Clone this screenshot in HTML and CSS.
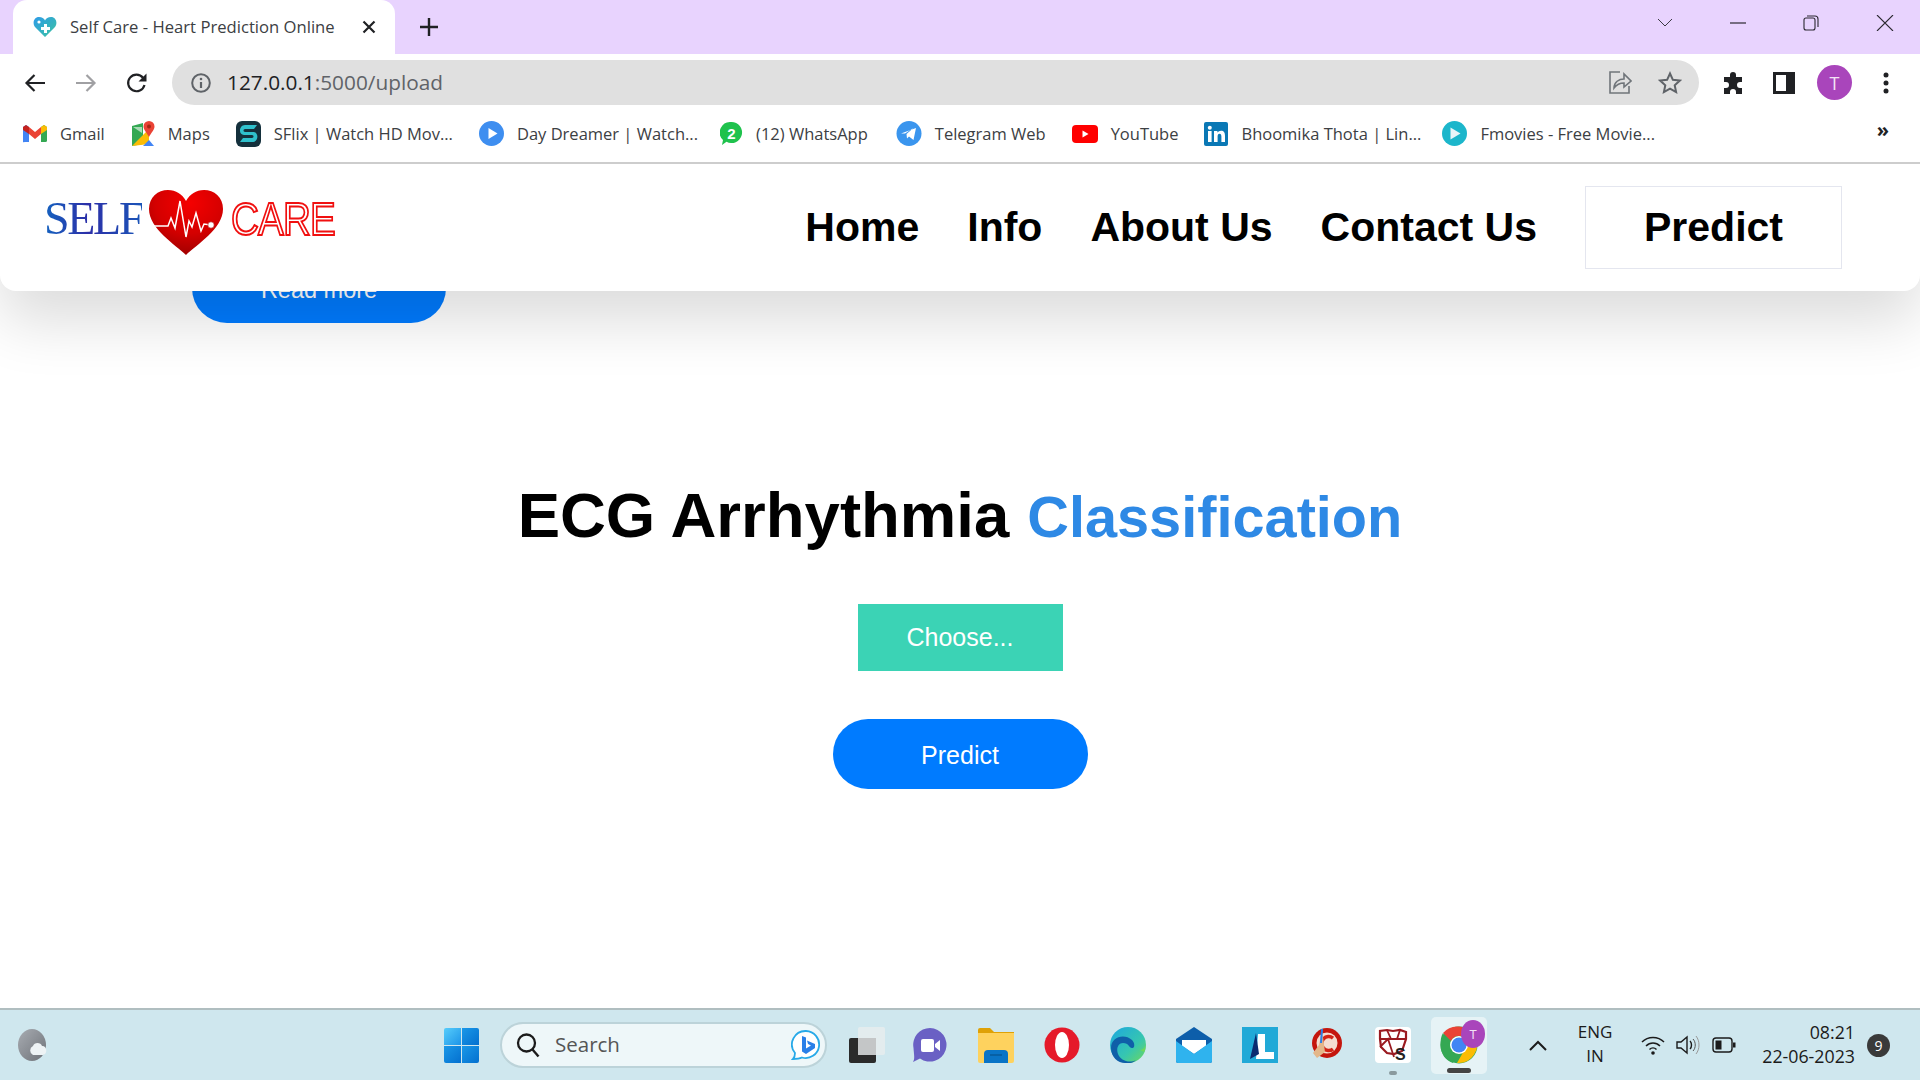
FILE: index.html
```html
<!DOCTYPE html>
<html lang="en">
<head>
<meta charset="utf-8">
<title>Self Care - Heart Prediction Online</title>
<link rel="stylesheet" href="styles.css">
</head>
<body>
<div class="tabstrip">
  <div class="tab">
    <svg width="24" height="22" viewBox="0 0 24 22"><defs><linearGradient id="fav" x1="0" y1="0" x2="1" y2="1"><stop offset="0" stop-color="#2e9be8"/><stop offset="1" stop-color="#3cc4a0"/></linearGradient></defs><path d="M12 21 2 11C-1 7 1 1 6 1c3 0 5 1.500 6 3.500C13 2.500 15 1 18 1c5 0 7 6 4 10z" fill="url(#fav)"/><path d="M11 8h3v3h3v3h-3v3h-3v-3H8v-3h3z" fill="#fff"/><circle cx="6" cy="6" r="1.600" fill="#fff"/></svg>
    <span class="tab-title">Self Care - Heart Prediction Online</span>
    <svg class="tab-close" width="14" height="14" viewBox="0 0 14 14"><path d="M1.500 1.500l11 11M12.500 1.500l-11 11" stroke="#202124" stroke-width="2.200" fill="none"/></svg>
  </div>
  <svg class="newtab" width="20" height="20" viewBox="0 0 20 20"><path d="M10 1v18M1 10h18" stroke="#202124" stroke-width="2.400" fill="none"/></svg>
  <div class="win-controls">
    <svg width="16" height="10" viewBox="0 0 16 10"><path d="M1 1l7 7 7-7" stroke="#3c3a44" stroke-width="1" fill="none"/></svg>
    <svg width="16" height="2" viewBox="0 0 16 2"><path d="M0 1h16" stroke="#2a2830" stroke-width="1.200"/></svg>
    <svg width="16" height="16" viewBox="0 0 16 16"><rect x="1" y="3" width="11" height="12" rx="2" fill="none" stroke="#2a2830" stroke-width="1.100"/><path d="M4 1h8a3 3 0 0 1 3 3v8" fill="none" stroke="#2a2830" stroke-width="1.100"/></svg>
    <svg width="18" height="16" viewBox="0 0 18 16"><path d="M1 0l16 16M17 0L1 16" stroke="#2a2830" stroke-width="1.100" fill="none"/></svg>
  </div>
</div>

<div class="toolbar">
  <svg width="22" height="20" viewBox="0 0 22 20"><path d="M21 10H3M10.500 2 2.500 10l8 8" fill="none" stroke="#202124" stroke-width="2.200"/></svg>
  <svg class="tool-fwd" width="22" height="20" viewBox="0 0 22 20"><path d="M1 10h18M11.500 2l8 8-8 8" fill="none" stroke="#a0a0a3" stroke-width="2.200"/></svg>
  <svg class="tool-reload" width="22" height="22" viewBox="0 0 22 22"><path d="M18.500 13a8.300 8.300 0 1 1-1.500-7.200" fill="none" stroke="#202124" stroke-width="2.200"/><path d="M20.500 1.500v8h-8z" fill="#202124"/></svg>
  <div class="omnibox">
    <svg width="22" height="20" viewBox="0 0 22 20"><circle cx="11" cy="10" r="8.800" fill="none" stroke="#5f6368" stroke-width="2"/><path d="M11 9v6" stroke="#5f6368" stroke-width="2.200"/><circle cx="11" cy="6" r="1.300" fill="#5f6368"/></svg>
    <span class="url"><span class="url-host">127.0.0.1</span>:5000/upload</span>
    <svg class="omni-share" width="24" height="24" viewBox="0 0 24 24"><path d="M12 2H2v21h19v-7" fill="none" stroke="#70757a" stroke-width="1.600" transform="translate(0 -1)"/><path d="M6 17c0-6 5-9 10-9V3l7 7-7 6v-4c-4 0-7 1-10 5z" fill="#e0e0e0" stroke="#70757a" stroke-width="1.600"/></svg>
    <svg class="omni-star" width="24" height="24" viewBox="0 0 24 24"><path d="M12 2.500l2.900 6.300 6.900.8-5.100 4.700 1.400 6.800-6.100-3.400-6.100 3.400 1.400-6.800-5.100-4.700 6.900-.8z" fill="none" stroke="#5f6368" stroke-width="2"/></svg>
  </div>
  <svg class="tool-ext" width="24" height="24" viewBox="0 0 24 24"><path d="M8 4a3 3 0 0 1 6 0v2h6v5h-2a3 3 0 0 0 0 6h2v6h-6v-2a3 3 0 0 0-6 0v2H2v-6h2a3 3 0 0 0 0-6H2V6h6z" fill="#202124"/></svg>
  <svg class="tool-side" width="22" height="22" viewBox="0 0 22 22"><rect x="0" y="0" width="22" height="22" fill="#202124"/><rect x="3" y="3" width="10" height="16" fill="#fff"/></svg>
  <div class="avatar">T</div>
  <svg class="tool-dots" width="6" height="22" viewBox="0 0 6 22"><circle cx="3" cy="3" r="2.500" fill="#202124"/><circle cx="3" cy="11" r="2.500" fill="#202124"/><circle cx="3" cy="19" r="2.500" fill="#202124"/></svg>
</div>

<div class="bookmarks">
  <a class="bm bm-gmail"><svg width="24" height="20" viewBox="0 0 24 20"><path d="M0 18V3l3-2 3 2v15H1.500A1.500 1.500 0 0 1 0 18z" fill="#4285f4"/><path d="M24 18V3l-3-2-3 2v15h4.500a1.500 1.500 0 0 0 1.500-1.500z" fill="#34a853"/><path d="M6 3l6 5 6-5v7l-6 5-6-5z" fill="#ea4335"/><path d="M18 3l3-2 3 2v3l-6 4z" fill="#fbbc04"/><path d="M0 3l3-2 3 2v7L0 6z" fill="#c5221f"/></svg><span>Gmail</span></a>
  <a class="bm bm-maps"><svg width="24" height="26" viewBox="0 0 24 26"><path d="M1 5l11-3v21l-11 2z" fill="#34a853"/><path d="M1 25 18 8v15z" fill="#fbbc04"/><path d="M12 25l6-6 5 6z" fill="#4285f4"/><path d="M2 6h9v6z" fill="#a8dab5"/><path d="M18 0a5.500 5.500 0 0 1 5.500 5.500C23.500 9 20 12 18 16c-2-4-5.500-7-5.500-10.500A5.500 5.500 0 0 1 18 0z" fill="#ea4335"/><circle cx="18" cy="5.500" r="2" fill="#a52714"/></svg><span>Maps</span></a>
  <a class="bm bm-sflix"><svg width="25" height="26" viewBox="0 0 25 26"><rect width="25" height="26" rx="6" fill="#14303c"/><path d="M21 4l-3 4H9c-2 0-2 3 0 3h8c6 0 6 10-1 10H4l3-4h9c2 0 2-3 0-3H8C2 14 3 4 9 4z" fill="#2fc0cc"/></svg><span>SFlix | Watch HD Mov...</span></a>
  <a class="bm bm-day"><svg width="25" height="25" viewBox="0 0 25 25"><circle cx="12.500" cy="12.500" r="12.500" fill="#3e8ef0"/><path d="M9.500 7l9 5.500-9 5.500z" fill="#fff"/></svg><span>Day Dreamer | Watch...</span></a>
  <a class="bm bm-wa"><svg width="23" height="25" viewBox="0 0 23 25"><path d="M11.500 1a10.500 10.500 0 1 1-5 19.700L2 24l1-5A10.500 10.500 0 0 1 11.500 1z" fill="#1fc24d"/><text x="11.500" y="17.500" class="wa-num">2</text></svg><span>(12) WhatsApp</span></a>
  <a class="bm bm-tg"><svg width="26" height="25" viewBox="0 0 26 25"><circle cx="13" cy="12.500" r="12.500" fill="#3a95ee"/><path d="M5 12.500 20 7l-2.500 12-4.500-3.500-2 2-.5-4.500 7-6-8.500 5.500z" fill="#fff"/></svg><span>Telegram Web</span></a>
  <a class="bm bm-yt"><svg width="26" height="18" viewBox="0 0 26 18"><rect width="26" height="18" rx="4" fill="#f00"/><path d="M10.500 5.500l6 3.500-6 3.500z" fill="#fff"/></svg><span>YouTube</span></a>
  <a class="bm bm-li"><svg width="24" height="24" viewBox="0 0 24 24"><rect width="24" height="24" rx="2" fill="#0a78b5"/><rect x="4" y="9" width="3.600" height="11" fill="#fff"/><circle cx="5.800" cy="5.800" r="2" fill="#fff"/><path d="M10 9h3.400v1.600C14.200 9.500 15.500 8.700 17 8.700c3 0 4 2 4 5V20h-3.600v-5.500c0-1.500-.5-2.700-1.900-2.700s-1.900 1.200-1.900 2.700V20H10z" fill="#fff"/></svg><span>Bhoomika Thota | Lin...</span></a>
  <a class="bm bm-fm"><svg width="25" height="25" viewBox="0 0 25 25"><circle cx="12.500" cy="12.500" r="12.500" fill="#1cb6cb"/><path d="M8.500 6.500l10 6-10 6z" fill="#e8f5f8"/></svg><span>Fmovies - Free Movie...</span></a>
  <span class="bm-more">»</span>
</div>

<div class="viewport">
  <header class="nav">
    <div class="logo">
      <span class="logo-self">SELF</span>
      <svg class="logo-heart" width="76" height="68" viewBox="0 0 76 68"><defs><radialGradient id="hrt" cx=".55" cy=".2" r=".85"><stop offset="0" stop-color="#f50000"/><stop offset=".55" stop-color="#d40000"/><stop offset="1" stop-color="#9a0000"/></radialGradient></defs><path d="M38 66C28 56 1 40 1 20 1 8 10 1 20 1c8 0 14 4 18 11C42 5 48 1 56 1c10 0 19 7 19 19 0 20-27 36-37 46z" fill="url(#hrt)"/><path d="M2 37h18l3-8 4 10 5-27 6 36 3-16 3 6 4-14 5 18 3-7 7 1" fill="none" stroke="#fff" stroke-width="1.500" stroke-linejoin="miter"/><circle cx="63" cy="36" r="3.200" fill="#fff" stroke="#a00" stroke-width=".6"/></svg>
      <span class="logo-care">CARE</span>
    </div>
    <nav class="links">
      <a class="link">Home</a>
      <a class="link">Info</a>
      <a class="link">About Us</a>
      <a class="link">Contact Us</a>
      <a class="link link-predict">Predict</a>
    </nav>
  </header>
  <main class="content">
    <a class="readmore">Read more</a>
    <h1 class="title"><span class="title-a">ECG Arrhythmia</span><span class="title-b">Classification</span></h1>
    <label class="choose">Choose...</label>
    <button class="predict">Predict</button>
  </main>
</div>

<footer class="taskbar">
  <svg class="tb-weather" width="34" height="32" viewBox="0 0 34 32"><defs><linearGradient id="moon" x1="0" y1="0" x2="1" y2="1"><stop offset="0" stop-color="#a8acb2"/><stop offset="1" stop-color="#6e7278"/></linearGradient></defs><ellipse cx="15" cy="16" rx="14" ry="16" fill="url(#moon)"/><path d="M16 26a5 5 0 0 1 0-9c1-4 8-4 9 0 5-.5 6 8 1 9z" fill="#eef3f5"/></svg>
  <svg class="tb-start" width="35" height="35" viewBox="0 0 35 35"><defs><linearGradient id="w1" x1="0" y1="0" x2="1" y2="1"><stop offset="0" stop-color="#57cdfb"/><stop offset="1" stop-color="#1c94e8"/></linearGradient><linearGradient id="w2" x1="0" y1="0" x2="1" y2="1"><stop offset="0" stop-color="#1a98e8"/><stop offset="1" stop-color="#0470cf"/></linearGradient></defs><path d="M2 0h15v17H0V2a2 2 0 0 1 2-2z" fill="url(#w1)"/><path d="M18 0h15a2 2 0 0 1 2 2v15H18z" fill="url(#w2)"/><path d="M0 18h17v17H2a2 2 0 0 1-2-2z" fill="url(#w2)"/><path d="M18 18h17v15a2 2 0 0 1-2 2H18z" fill="url(#w2)"/></svg>
  <div class="tb-search">
    <svg width="24" height="26" viewBox="0 0 24 26"><circle cx="10.500" cy="11" r="8.500" fill="none" stroke="#1b1b1b" stroke-width="2.300"/><path d="M16.500 17.500l6 7" stroke="#1b1b1b" stroke-width="2.400"/></svg>
    <span class="tb-search-text">Search</span>
    <svg class="tb-bing" width="30" height="32" viewBox="0 0 30 32"><path d="M15 2a13.500 13.500 0 1 1-4 26.500C8 30 4 30 2 30c2-2 2-4 2-6A13.500 13.500 0 0 1 15 2z" fill="#fff" stroke="#27a9e8" stroke-width="1.800"/><path d="M11 7l4 1.500v11l5-3-3-1.500-1-3.500 8 3.500v4L15 25l-4-2.500z" fill="#2a7fe8"/></svg>
  </div>
  <svg class="tb-icon tb-first" width="36" height="36" viewBox="0 0 36 36"><rect x="0" y="11" width="27" height="25" rx="2" fill="#2b2b2b"/><rect x="9" y="0" width="27" height="28" rx="2" fill="#e6eced" fill-opacity=".85"/><rect x="9" y="11" width="18" height="17" fill="#c4c6c7"/></svg>
  <svg class="tb-icon tb-second" width="36" height="36" viewBox="0 0 36 36"><path d="M18 1a16.800 16.800 0 1 1-10 30.500L1 35c2-3 1-7 .5-14A16.800 16.800 0 0 1 18 1z" fill="#6a60c4"/><rect x="9" y="12" width="13" height="13" rx="2" fill="#fff"/><path d="M23 17l5-4v11l-5-4z" fill="#fff"/></svg>
  <svg class="tb-icon" width="36" height="36" viewBox="0 0 36 36"><path d="M0 3a2 2 0 0 1 2-2h10l4 4h20v6H0z" fill="#dfa106"/><path d="M0 6h36v28a2 2 0 0 1-2 2H2a2 2 0 0 1-2-2z" fill="#fed25e"/><path d="M6 36V27a4 4 0 0 1 4-4h16a4 4 0 0 1 4 4v9z" fill="#0a74c6"/><path d="M12 28h12" stroke="#075a9a" stroke-width="1.500"/></svg>
  <svg class="tb-icon" width="36" height="36" viewBox="0 0 36 36"><ellipse cx="18" cy="18" rx="17.500" ry="17.500" fill="#e51a2a"/><ellipse cx="18" cy="18" rx="7" ry="13" fill="#fff"/></svg>
  <svg class="tb-icon" width="36" height="36" viewBox="0 0 36 36"><defs><linearGradient id="edge" x1="0" y1="0" x2="1" y2="1"><stop offset="0" stop-color="#1ca7e0"/><stop offset=".6" stop-color="#36c6b0"/><stop offset="1" stop-color="#6fd85a"/></linearGradient></defs><circle cx="18" cy="18" r="18" fill="url(#edge)"/><path d="M1 21C1 10 14 6 22 13c3 3 3 8 0 8s-3-5-9-5c-5 0-7 6-5 11 2 6 11 10 18 6-4 4-8 3-11 3C8 36 1 30 1 21z" fill="#0f5fa8"/><path d="M30 23c4 0 6-4 5-8 1 5 0 9-1 10z" fill="#6fd85a"/></svg>
  <svg class="tb-icon" width="36" height="36" viewBox="0 0 36 36"><path d="M18 0l18 12v22a2 2 0 0 1-2 2H2a2 2 0 0 1-2-2V12z" fill="#0d5eaa"/><path d="M6 13h24v6L18 27 6 19z" fill="#fff"/><path d="M0 14l18 13 18-13v20a2 2 0 0 1-2 2H2a2 2 0 0 1-2-2z" fill="#2fb3ee"/></svg>
  <svg class="tb-icon" width="36" height="36" viewBox="0 0 36 36"><rect width="36" height="36" fill="#21a9d7"/><path d="M16 7h7v18h9v7H14z" fill="#fff"/><path d="M14 6 8 32l9-5z" fill="#0a2a70"/></svg>
  <svg class="tb-icon" width="36" height="36" viewBox="0 0 36 36"><circle cx="19" cy="16" r="15" fill="#c4160d"/><circle cx="19" cy="16" r="10.500" fill="#f4ddd0"/><path d="M25 11a7 7 0 1 0 0 11" fill="none" stroke="#d32315" stroke-width="3.500"/><path d="M14 3l-3 15-6 8 4 5 8-6z" fill="#e3b78a"/><path d="M14 2l-1 14" stroke="#2a7fe8" stroke-width="2"/></svg>
  <div class="tb-tile"><svg width="30" height="36" viewBox="0 0 30 36"><path d="M2 12V4l7-1 6 1 7-1 6 2v7l-4 12-8 3-7-1-6-6z" fill="none" stroke="#9a1a20" stroke-width="2.200"/><path d="M2 12l26 0M9 3l4 9M22 3l-3 9M2 20l8-8 6 18" fill="none" stroke="#9a1a20" stroke-width="1.800"/><text x="17" y="33" class="ks-s">S</text></svg></div>
  <div class="tb-chrome">
    <svg width="38" height="38" viewBox="0 0 38 38"><circle cx="19" cy="19" r="18.500" fill="#34a853"/><path d="M19 .5A18.500 18.500 0 0 1 35 10H19a9 9 0 0 0-8 5L3 7A18.500 18.500 0 0 1 19 .5z" fill="#ea4335"/><path d="M3 7l8 14c1 3 5 6 8 7l-6 9C6 35 .5 28 .5 19 .5 14 1 10 3 7z" fill="#34a853"/><path d="M35 10a18.500 18.500 0 0 1-18 27l8-14a9 9 0 0 0 0-13z" fill="#fbbc04"/><circle cx="19" cy="19" r="9" fill="#fff"/><circle cx="19" cy="19" r="7.500" fill="#4285f4"/></svg>
    <div class="tb-chrome-badge">T</div>
  </div>
  <svg class="tb-chev" width="18" height="11" viewBox="0 0 18 11"><path d="M1 10l8-8 8 8" fill="none" stroke="#1b1b1b" stroke-width="2"/></svg>
  <div class="tb-lang">ENG<br>IN</div>
  <svg class="tb-wifi" width="24" height="20" viewBox="0 0 24 20"><path d="M1 7c6-6 16-6 22 0M5 11c4-4 10-4 14 0M8.500 14.500c2-2 5-2 7 0" fill="none" stroke="#1b1b1b" stroke-width="1.500"/><circle cx="12" cy="18" r="1.800" fill="#1b1b1b"/></svg>
  <svg class="tb-vol" width="24" height="22" viewBox="0 0 24 22"><path d="M1 8v6h4l6 5V3L5 8z" fill="none" stroke="#1b1b1b" stroke-width="1.400"/><path d="M14 7c2 2 2 6 0 8" fill="none" stroke="#1b1b1b" stroke-width="1.400"/><path d="M17 5c3 3 3 9 0 12" fill="none" stroke="#555" stroke-width="1"/><path d="M20 2c4 5 4 13 0 18" fill="none" stroke="#999" stroke-width="1"/></svg>
  <svg class="tb-batt" width="24" height="16" viewBox="0 0 24 16"><rect x="1" y="1" width="19" height="14" rx="3" fill="none" stroke="#1b1b1b" stroke-width="1.400"/><rect x="3.500" y="3.500" width="6" height="9" fill="#1b1b1b"/><rect x="21" y="5.500" width="2.500" height="5" fill="#1b1b1b"/></svg>
  <div class="tb-clock">08:21<br>22-06-2023</div>
  <div class="tb-notif">9</div>
</footer>
</body>
</html>
```
FILE: styles.css
```css
* { box-sizing: border-box; }
html, body { margin: 0; padding: 0; }
body {
  width: 1920px;
  height: 1080px;
  overflow: hidden;
  display: flex;
  flex-direction: column;
  background: #fff;
  font-family: "Liberation Sans", Arial, sans-serif;
}
svg { display: block; flex: none; }

/* browser tab strip */
.tabstrip {
  height: 54px;
  flex: none;
  background: #e8d3fe;
  display: flex;
  align-items: flex-end;
}
.tab {
  margin-left: 13px;
  width: 382px;
  height: 54px;
  background: #fff;
  border-radius: 14px 14px 0 0;
  display: flex;
  align-items: center;
  padding: 0 19px 0 20px;
  font-family: "Open Sans", sans-serif;
  font-size: 16.650px;
  color: #3c4043;
}
.tab-title { margin-left: 13px; padding-bottom: 2px; white-space: nowrap; flex: 1; }
.newtab { margin: 0 0 17px 24px; }
.win-controls {
  margin-left: auto;
  align-self: center;
  display: flex;
  align-items: center;
  gap: 57px;
  padding-right: 26px;
  margin-top: -8px;
}

/* toolbar */
.toolbar {
  height: 51px;
  flex: none;
  display: flex;
  align-items: center;
  padding: 6px 0 0 24px;
}
.tool-fwd { margin-left: 29px; }
.tool-reload { margin-left: 29px; }
.omnibox {
  margin-left: 24px;
  width: 1527px;
  height: 45px;
  border-radius: 23px;
  background: #e0e0e0;
  display: flex;
  align-items: center;
  padding: 0 17px 0 18px;
}
.url {
  margin-left: 15px;
  padding-bottom: 2px;
  font-family: "Open Sans", sans-serif;
  font-size: 20.800px;
  color: #5f6368;
  white-space: nowrap;
}
.url-host { color: #202124; }
.omni-share { margin-left: auto; }
.omni-star { margin-left: 26px; }
.tool-ext { margin-left: 23px; }
.tool-side { margin-left: 27px; }
.avatar {
  margin-left: 22px;
  width: 35px;
  height: 35px;
  border-radius: 50%;
  background: #a945bb;
  color: #f3e3f6;
  display: flex;
  align-items: center;
  justify-content: center;
  font-family: "Open Sans", sans-serif;
  font-size: 18px;
}
.tool-dots { margin-left: 31px; }

/* bookmarks */
.bookmarks {
  height: 59px;
  flex: none;
  border-bottom: 2px solid #cdcdcd;
  display: flex;
  align-items: center;
  padding-left: 23px;
  font-family: "Open Sans", sans-serif;
  font-size: 16.500px;
  color: #3c4043;
}
.bm { display: flex; align-items: center; gap: 13px; white-space: nowrap; margin-right: 26px; }
.bm-day { margin-right: 22px; }
.bm-wa { margin-right: 28px; }
.bm-li { margin-right: 21px; }
.wa-num { font: bold 15px "Liberation Sans", sans-serif; fill: #fff; text-anchor: middle; }
.bm-more { margin-left: auto; padding-right: 31px; font-size: 20px; font-weight: 700; color: #202124; margin-top: -8px; }

/* page */
.viewport {
  flex: 1;
  min-height: 0;
  overflow: hidden;
  display: flex;
  flex-direction: column;
}
.nav {
  position: relative;
  z-index: 2;
  height: 127px;
  flex: none;
  background: #fff;
  border-radius: 0 0 16px 16px;
  box-shadow: 0 30px 60px rgba(0, 0, 0, .14);
  display: flex;
  align-items: flex-start;
  justify-content: space-between;
  padding: 22px 78px 0 44px;
}
.logo { display: flex; align-items: flex-start; margin-top: 3px; }
.logo-self {
  font-family: "Liberation Serif", serif;
  font-size: 46px;
  line-height: 44px;
  letter-spacing: -2.300px;
  margin-top: 8px;
  background: linear-gradient(90deg, #1463c0, #2c2fa8 45%, #1a55b8);
  -webkit-background-clip: text;
  background-clip: text;
  color: transparent;
}
.logo-heart { margin-left: 6px; }
.logo-care {
  margin: 8px 0 0 7px;
  font-size: 46px;
  line-height: 44px;
  letter-spacing: -1px;
  color: #fff;
  -webkit-text-stroke: 2px #f01010;
  transform: scaleX(.84);
  transform-origin: left center;
}
.links { display: flex; align-items: center; gap: 48px; font-size: 41px; font-weight: 700; color: #000; }
.link { white-space: nowrap; }
.link-predict {
  width: 257px;
  height: 83px;
  border: 1px solid #e4e6ef;
  display: flex;
  align-items: center;
  justify-content: center;
}

.content { display: flex; flex-direction: column; align-items: center; margin-top: -38px; }
.readmore {
  align-self: flex-start;
  margin-left: 192px;
  width: 254px;
  height: 70px;
  padding-top: 5px;
  border-radius: 35px;
  background: #007bff;
  color: #fff;
  font-size: 23.500px;
  display: flex;
  align-items: center;
  justify-content: center;
}
.title {
  margin: 156px 0 0;
  font-size: 63.500px;
  line-height: 72px;
  display: flex;
  align-items: baseline;
  gap: 18px;
  color: #000;
  white-space: nowrap;
}
.title-b { font-size: 57.700px; color: #2e89e5; position: relative; top: 0; }
.choose {
  margin-top: 51px;
  width: 205px;
  height: 67px;
  background: #3bd3b5;
  color: #fff;
  font-size: 25px;
  display: flex;
  align-items: center;
  justify-content: center;
}
.predict {
  margin-top: 48px;
  width: 255px;
  height: 70px;
  padding-top: 3px;
  border: 0;
  border-radius: 35px;
  background: #007bff;
  color: #fff;
  font-family: inherit;
  font-size: 25px;
}

/* taskbar */
.taskbar {
  height: 72px;
  flex: none;
  background: #cfe7ee;
  border-top: 2px solid #b0bec0;
  display: flex;
  align-items: center;
  font-family: "Open Sans", sans-serif;
  color: #1b1b1b;
}
.tb-weather { margin-left: 17px; }
.tb-start { margin-left: 393px; }
.tb-search {
  margin-left: 21px;
  width: 327px;
  height: 46px;
  border-radius: 23px;
  background: #eef7f9;
  border: 2px solid #bcd3d9;
  display: flex;
  align-items: center;
  padding: 0 4px 0 14px;
  font-size: 20.500px;
  color: #555;
}
.tb-search-text { margin-left: 15px; padding-bottom: 2px; }
.tb-bing { margin-left: auto; }
.tb-icon { margin-left: 30px; }
.tb-first { margin-left: 22px; }
.tb-second { margin-left: 27px; }
.tb-tile {
  margin-left: 31px;
  width: 36px;
  height: 36px;
  background: #fff;
  border-radius: 4px;
  display: flex;
  justify-content: center;
  position: relative;
}
.tb-tile::after {
  content: "";
  position: absolute;
  left: 14px;
  bottom: -12px;
  width: 8px;
  height: 4px;
  border-radius: 2px;
  background: #8a9a9e;
}
.ks-s { font: bold 16px "Liberation Sans", sans-serif; fill: #222; }
.tb-chrome {
  margin-left: 20px;
  width: 56px;
  height: 57px;
  background: #e6f3f6;
  border-radius: 5px;
  display: flex;
  align-items: center;
  justify-content: center;
  position: relative;
}
.tb-chrome::after {
  content: "";
  position: absolute;
  left: 16px;
  bottom: 1px;
  width: 24px;
  height: 5px;
  border-radius: 3px;
  background: #444;
}
.tb-chrome-badge {
  position: absolute;
  left: 30px;
  top: 3px;
  width: 24px;
  height: 28px;
  border-radius: 50%;
  background: #a945bb;
  color: #f3e3f6;
  font-size: 13px;
  display: flex;
  align-items: center;
  justify-content: center;
}
.tb-chev { margin-left: 42px; }
.tb-lang { margin-left: 20px; padding-bottom: 2px; width: 56px; text-align: center; font-size: 17px; line-height: 24px; }
.tb-wifi { margin-left: 18px; }
.tb-vol { margin-left: 11px; }
.tb-batt { margin-left: 12px; }
.tb-clock { margin-left: auto; padding-bottom: 2px; text-align: right; font-size: 17.800px; line-height: 24px; }
.tb-notif {
  margin: 0 30px 0 12px;
  width: 23px;
  height: 23px;
  border-radius: 50%;
  background: #3a3a3a;
  color: #fff;
  font-size: 14px;
  display: flex;
  align-items: center;
  justify-content: center;
}
```
